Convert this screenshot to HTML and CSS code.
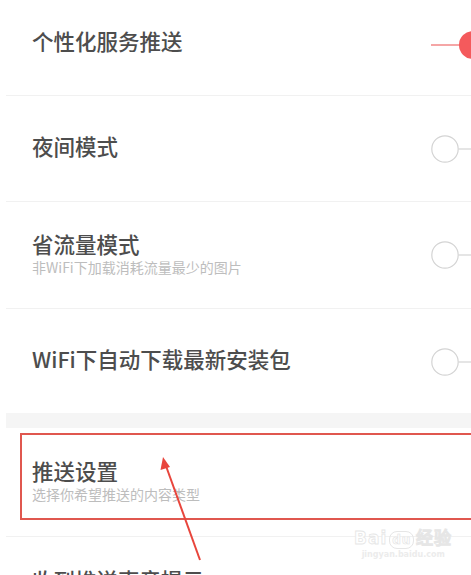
FILE: index.html
```html
<!DOCTYPE html>
<html lang="zh-CN">
<head>
    <meta charset="UTF-8">
    <meta name="viewport" content="width=device-width, initial-scale=1.0">
    <title>设置</title>
    <link rel="stylesheet" href="styles.css">
</head>
<body>
    <div class="settings">
        <div class="row row-first">
            <div class="label">
                <div class="title">个性化服务推送</div>
            </div>
            <svg class="switch" width="44" height="30" viewBox="0 0 44 30">
                <line x1="4" y1="15" x2="33" y2="15" stroke="#ef6a6a" stroke-width="1.2"/>
                <circle cx="46" cy="15" r="14" fill="#f45a5c"/>
            </svg>
        </div>
        <div class="divider"></div>

        <div class="row row-2">
            <div class="label">
                <div class="title">夜间模式</div>
            </div>
            <svg class="switch" width="44" height="30" viewBox="0 0 44 30">
                <line x1="31.5" y1="15" x2="44" y2="15" stroke="#d4d4d4" stroke-width="1.2"/>
                <circle cx="18" cy="15" r="13.2" fill="#fff" stroke="#d4d4d4" stroke-width="1.2"/>
            </svg>
        </div>
        <div class="divider"></div>

        <div class="row row-3">
            <div class="label">
                <div class="title">省流量模式</div>
                <div class="subtitle">非WiFi下加载消耗流量最少的图片</div>
            </div>
            <svg class="switch" width="44" height="30" viewBox="0 0 44 30">
                <line x1="31.5" y1="15" x2="44" y2="15" stroke="#d4d4d4" stroke-width="1.2"/>
                <circle cx="18" cy="15" r="13.2" fill="#fff" stroke="#d4d4d4" stroke-width="1.2"/>
            </svg>
        </div>
        <div class="divider"></div>

        <div class="row row-4">
            <div class="label">
                <div class="title">WiFi下自动下载最新安装包</div>
            </div>
            <svg class="switch" width="44" height="30" viewBox="0 0 44 30">
                <line x1="31.5" y1="15" x2="44" y2="15" stroke="#d4d4d4" stroke-width="1.2"/>
                <circle cx="18" cy="15" r="13.2" fill="#fff" stroke="#d4d4d4" stroke-width="1.2"/>
            </svg>
        </div>
        <div class="gap"></div>

        <div class="row row-5">
            <div class="label">
                <div class="title">推送设置</div>
                <div class="subtitle">选择你希望推送的内容类型</div>
            </div>
        </div>
        <div class="divider"></div>

        <div class="row row-6">
            <div class="label">
                <div class="title">收到推送声音提示</div>
            </div>
        </div>
    </div>

    <!-- annotations drawn over the screenshot -->
    <div class="highlight"></div>
    <svg class="arrow" width="471" height="575" viewBox="0 0 471 575">
        <line x1="200" y1="560" x2="166" y2="466" stroke="#e8453c" stroke-width="2"/>
        <polygon points="163,457 160.5,470 170,467" fill="#e8453c"/>
    </svg>
    <div class="watermark">
        <div class="wm-logo">Bai<span class="wm-du">du</span>经验</div>
        <div class="wm-url">jingyan.baidu.com</div>
    </div>
</body>
</html>
```

FILE: styles.css
```css
* {
    margin: 0;
    padding: 0;
    box-sizing: border-box;
}

body {
    width: 471px;
    height: 575px;
    overflow: hidden;
    background: #fff;
    position: relative;
    font-family: "Noto Sans CJK SC", "Noto Sans", sans-serif;
}

.settings {
    width: 471px;
}

.row {
    display: flex;
    align-items: center;
    justify-content: space-between;
    padding-left: 32px;
    background: #fff;
}

.row-first {
    height: 95px;
    padding-bottom: 14px;
}

.row-2 {
    height: 105px;
    padding-bottom: 5px;
}

.row-3 {
    height: 106px;
}

.row-4 {
    height: 104px;
    padding-bottom: 4px;
}

.row-5 {
    height: 108px;
}

.row-6 {
    height: 60px;
    align-items: flex-start;
    padding-top: 31px;
}

.title {
    font-size: 21.5px;
    line-height: 24px;
    font-weight: 500;
    color: #4d4d4d;
}

.subtitle {
    font-size: 14px;
    line-height: 22px;
    color: #bdbdbd;
}

.switch {
    display: block;
    flex-shrink: 0;
}

.row-first .switch,
.row-2 .switch,
.row-4 .switch {
    margin-bottom: -5px;
}

.row-first .switch {
    margin-bottom: -9px;
}

.divider {
    height: 1px;
    margin-left: 6px;
    background: #f1f1f1;
}

.gap {
    height: 15px;
    margin-left: 6px;
    background: #f5f5f5;
}

.highlight {
    position: absolute;
    left: 20px;
    top: 433px;
    width: 460px;
    height: 87px;
    border: 2px solid #e0574f;
}

.arrow {
    position: absolute;
    left: 0;
    top: 0;
}

.watermark {
    position: absolute;
    left: 354px;
    top: 528px;
    text-align: center;
    color: #fff;
    font-family: "DejaVu Sans", sans-serif;
}

.wm-logo {
    font-size: 17px;
    line-height: 20px;
    font-weight: bold;
    -webkit-text-stroke: 0.8px #e6e6e6;
    letter-spacing: 1px;
}

.wm-du {
    display: inline-block;
    font-size: 12px;
    line-height: 14px;
    padding: 1px 2px;
    margin: 0 2px;
    border: 1px solid #e6e6e6;
    border-radius: 8px;
    -webkit-text-stroke: 0.6px #e2e2e2;
}

.wm-url {
    font-size: 8px;
    line-height: 12px;
    color: #ececec;
    font-weight: bold;
}
```
